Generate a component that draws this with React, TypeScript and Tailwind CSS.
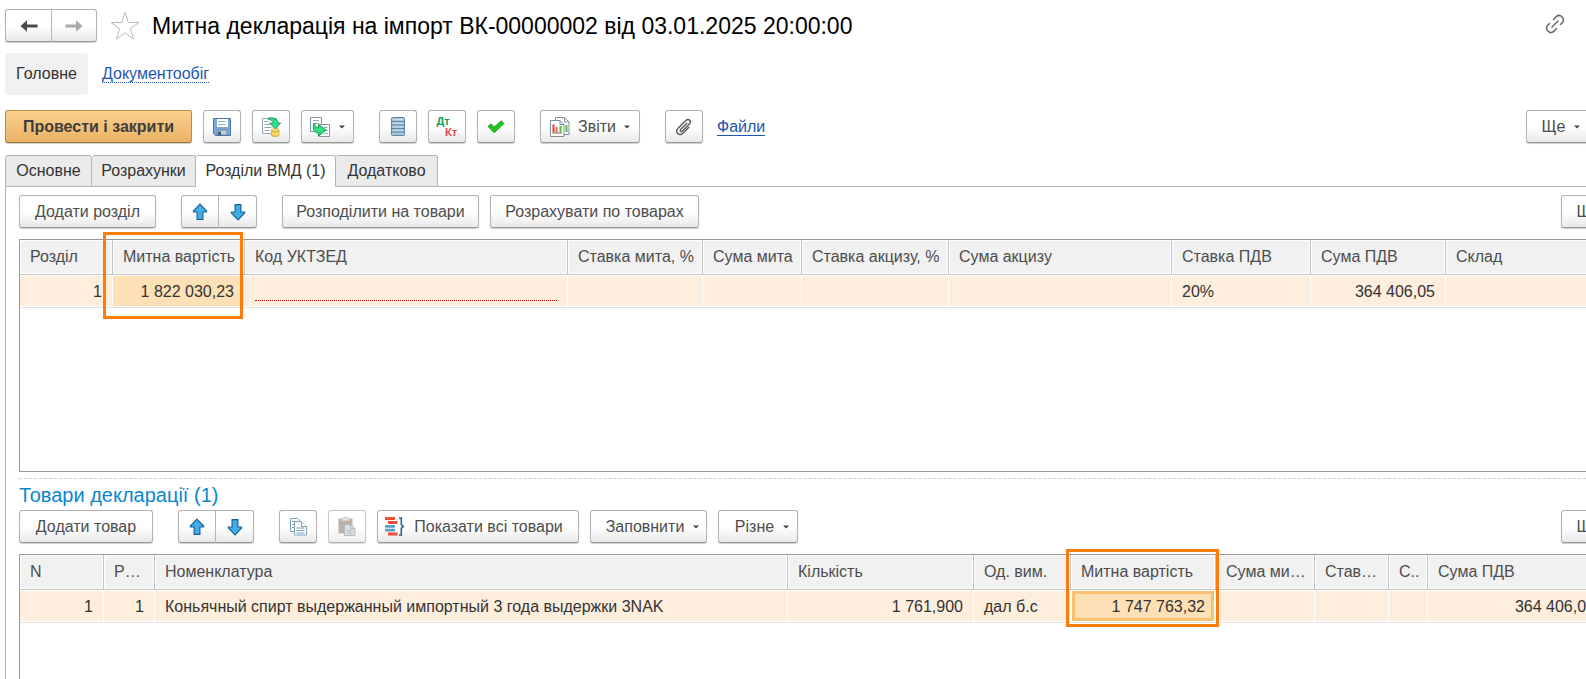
import React from 'react';

type Column = {
  title: string;
  width?: number;
  value?: string;
  right?: boolean;
  state?: 'marked' | 'active' | 'required';
};

const sections: Column[] = [
  { title: 'Розділ', width: 93, value: '1', right: true },
  { title: 'Митна вартість', width: 132, value: '1 822 030,23', right: true, state: 'marked' },
  { title: 'Код УКТЗЕД', width: 323, state: 'required' },
  { title: 'Ставка мита, %', width: 135 },
  { title: 'Сума мита', width: 99 },
  { title: 'Ставка акцизу, %', width: 147 },
  { title: 'Сума акцизу', width: 223 },
  { title: 'Ставка ПДВ', width: 139, value: '20%' },
  { title: 'Сума ПДВ', width: 135, value: '364 406,05', right: true },
  { title: 'Склад' },
];

const goods: Column[] = [
  { title: 'N', width: 84, value: '1', right: true },
  { title: 'Р…', width: 51, value: '1', right: true },
  { title: 'Номенклатура', width: 633, value: 'Коньячный спирт выдержанный импортный 3 года выдержки 3NAK' },
  { title: 'Кількість', width: 186, value: '1 761,900', right: true },
  { title: 'Од. вим.', width: 97, value: 'дал б.с' },
  { title: 'Митна вартість', width: 145, value: '1 747 763,32', right: true, state: 'active' },
  { title: 'Сума ми…', width: 99 },
  { title: 'Став…', width: 74 },
  { title: 'С..', width: 39 },
  { title: 'Сума ПДВ', width: 178, value: '364 406,05', right: true },
  { title: '' },
];

const buttonBase =
  'flex h-[33px] shrink-0 items-center justify-center border border-[#b3b3b3] border-b-[#989898] bg-linear-to-b from-white from-50% to-[#e9e9e9] text-base whitespace-nowrap text-[#4d4d4d] shadow-[0_1px_1px_#cfcfcf]';

const Button: React.FC<{ className?: string; label?: string; disabled?: boolean; children: React.ReactNode }> = ({
  className = '',
  label,
  disabled,
  children,
}) => (
  <button type="button" aria-label={label} disabled={disabled} className={`${buttonBase} rounded-[3px] ${className}`}>
    {children}
  </button>
);

const Caret = () => (
  <svg width="6" height="4" viewBox="0 0 6 4" className="shrink-0">
    <path d="M0 0.5h6L3 3.5z" fill="#444" />
  </svg>
);

const MoreButton = () => (
  <Button className="w-[70px] gap-[9px]">
    Ще
    <Caret />
  </Button>
);

const BlueArrow: React.FC<{ down?: boolean }> = ({ down }) => (
  <svg width="16" height="18" viewBox="0 0 16 18" className={down ? 'rotate-180' : ''}>
    <path d="M8 1.2 14.6 8v1H10.9v7.3H5.1V9H1.4V8z" fill="#41aeea" stroke="#1a6496" strokeWidth="1.2" />
  </svg>
);

const MoveButtons = () => (
  <div className="flex">
    <button type="button" aria-label="Перемістити вгору" className={`${buttonBase} w-[38px] rounded-l-[3px]`}>
      <BlueArrow />
    </button>
    <button type="button" aria-label="Перемістити вниз" className={`${buttonBase} w-[38px] rounded-r-[3px] border-l-0`}>
      <BlueArrow down />
    </button>
  </div>
);

const HistoryArrow: React.FC<{ color: string; forward?: boolean }> = ({ color, forward }) => (
  <svg width="18" height="14" viewBox="0 0 18 14" className={forward ? 'rotate-180' : ''}>
    <path d="M0.5 7 7 1.2V5.5H17.5V8.5H7V12.8z" fill={color} />
  </svg>
);

const SaveIcon = () => (
  <svg width="18" height="18" viewBox="0 0 18 18">
    <path d="M.5.5h17v17H2.500l-2-2z" fill="#7ba8d8" stroke="#4d769f" />
    <path d="M4 1h11v8H4z" fill="#fff" />
    <path d="M5 3.500h8M5 6.500h8" stroke="#9fb2c4" />
    <path d="M4 12h10v5H4z" fill="#c3cfd6" stroke="#5d7d99" strokeWidth=".8" />
    <path d="M5 13.500h3V17H5z" fill="#3f5b74" />
  </svg>
);

const PostIcon = () => (
  <svg width="20" height="20" viewBox="0 0 20 20">
    <path d="M1.500 1.500h14v15h-14z" fill="#fff" stroke="#95a3b0" />
    <path d="M3.500 4.500h4M3.500 7.500h6M3.500 10.500h7M3.500 13.500h5" stroke="#95a3b0" />
    <path d="M7.500 1c6-.8 9.200 1.200 9.500 5h2.700l-5.500 6-5.500-6h3.500C12 4 10.500 2.800 7.500 2.500z" fill="#2ddf85" stroke="#138a48" strokeWidth=".8" />
    <path d="M10.500 13v5c0 2 7.500 2 7.500 0v-5z" fill="#f0cb48" stroke="#c29a24" strokeWidth=".7" />
    <ellipse cx="14.250" cy="13" rx="3.750" ry="1.300" fill="#fdf0a0" stroke="#c29a24" strokeWidth=".7" />
    <path d="M10.500 15.500c0 2 7.500 2 7.500 0" fill="none" stroke="#fdf0a0" />
  </svg>
);

const CreateFromIcon = () => (
  <svg width="21" height="20" viewBox="0 0 21 20">
    <path d="M.5.5h11v14H.5z" fill="#fff" stroke="#8194a8" />
    <path d="M3 3.500h6M3 6.500h6" stroke="#9aa9b8" />
    <path d="M9.500 7.500h10v12h-10z" fill="#fff" stroke="#8194a8" />
    <path d="M14 10.500h3.500M16 13.500h2M14 16.500h4" stroke="#9aa9b8" />
    <path d="M4.500 6.500C2.500 9 2.500 15.500 8.500 16v3.200L16 13 8.500 7.500v3.300C6.300 10.800 5 9.500 4.500 6.500z" fill="#2ddf85" stroke="#138a48" strokeWidth=".9" />
  </svg>
);

const RegisterIcon = () => (
  <svg width="14" height="19" viewBox="0 0 14 19">
    <rect x=".5" y=".5" width="13" height="18" rx="1" fill="#a5c5dc" stroke="#63839f" />
    <path d="M0 4.500h14M0 8h14M0 11.500h14M0 15h14" stroke="#63839f" strokeWidth="1.200" />
    <path d="M2 2.500h10M2 6.200h10M2 9.800h10M2 13.300h10" stroke="#c9dfee" />
  </svg>
);

const CheckIcon = () => (
  <svg width="18" height="14" viewBox="0 0 18 14">
    <path d="M1 6.500 4 3.800 7.200 7 14.200.8 17 3.600 7.200 12.800z" fill="#1fc41f" stroke="#129412" strokeWidth=".8" />
  </svg>
);

const ReportIcon = () => (
  <svg width="20" height="20" viewBox="0 0 20 20">
    <path d="M5.500.5h9l4.500 4.500v12.500H5.500z" fill="#fff" stroke="#7f8f9d" />
    <path d="M14.500.5V5H19" fill="none" stroke="#7f8f9d" />
    <path d="M16.500 8v7" stroke="#55bd3c" strokeWidth="2" />
    <path d="M.5 3.500h9.500l4 4v12H.5z" fill="#fff" stroke="#7f8f9d" />
    <path d="M10 3.500v4h4" fill="none" stroke="#7f8f9d" />
    <path d="M3.500 7.500v8" stroke="#d94032" strokeWidth="2" />
    <path d="M6.500 10v5.500" stroke="#ef6b4c" strokeWidth="2" />
    <path d="M10.500 9v6.500" stroke="#55bd3c" strokeWidth="2" />
    <path d="M2.500 16h9.500" stroke="#8a6a5a" />
  </svg>
);

const ClipIcon = () => (
  <svg width="18" height="18" viewBox="0 0 18 18" fill="none" stroke="#555" strokeWidth="1.300" strokeLinecap="round">
    <path d="M11.800 5.300 5.600 11.500c-1 1.200.5 2.700 1.700 1.700l7.300-7.400c2.300-2.600-1-5.700-3.500-3.500L3 10.300c-3.500 3.800 1.200 8.300 4.900 4.900l6-6" />
  </svg>
);

const LinkIcon = () => (
  <svg width="20" height="20" viewBox="0 0 20 20" fill="none" stroke="#666" strokeWidth="1.500" strokeLinecap="round">
    <path d="M7 13 13 7" />
    <path d="M8.500 5.500 11.300 2.600c3.600-3.300 9.300 1.700 6.100 6L15.500 10.500" />
    <path d="M11.500 14.500 8.700 17.400c-3.600 3.300-9.300-1.700-6.100-6L4.500 9.500" />
  </svg>
);

const CopyIcon = () => (
  <svg width="17" height="18" viewBox="0 0 17 18" fill="#fff" stroke="#7fa3b8">
    <path d="M.5.500h7l3 3v10H.5z" />
    <path d="M2 3.500h2M2 6.500h2M2 9.500h2" />
    <path d="M4.500 3.500h7l5 5v8.500h-12z" />
    <path d="M11.500 3.500v5h5M6.500 10h8M6.500 12.500h8M6.500 15h8" />
  </svg>
);

const PasteIcon = () => (
  <svg width="18" height="19" viewBox="0 0 18 19">
    <path d="M.5 1.500h14v15H.5z" fill="#a8968c" />
    <path d="M3.500 4V2.200L5.500.5h4l2 1.700V4z" fill="#d9d9d9" stroke="#a5a5a5" strokeWidth=".7" />
    <path d="M6.500 7.500h6l4.500 4v7H6.500z" fill="#d3d7dc" stroke="#98a1aa" />
    <path d="M12.500 7.500v4H17M8.500 13.500h6M8.500 16h6" fill="none" stroke="#98a1aa" />
  </svg>
);

const ShowAllIcon = () => (
  <svg width="20" height="19" viewBox="0 0 20 19">
    <path d="M0 1.500h10M3 5.500h9.500M3 17h9.500" stroke="#f04e37" strokeWidth="2.800" />
    <path d="M0 9.300h10M0 13.200h10" stroke="#5d9fc9" strokeWidth="2.800" />
    <path d="M14 1h2.300v6.500l2 1.900-2 1.900V18H14" fill="none" stroke="#2f6690" strokeWidth="1.600" />
  </svg>
);

const DataTable: React.FC<{ columns: Column[]; label: string }> = ({ columns, label }) => (
  <table aria-label={label} className="w-full table-fixed border-separate border-spacing-0 text-base">
    <colgroup>
      {columns.map((column, i) => (
        <col key={i} style={{ width: column.width }} />
      ))}
    </colgroup>
    <thead>
      <tr className="h-[35px] bg-[#f1f1f1]">
        {columns.map((column, i) => (
          <th
            key={i}
            className="border-r border-b border-[#c4c4c4] pr-1 pl-[10px] text-left font-normal whitespace-nowrap text-[#4d4d4d] shadow-[inset_0_0_0_1px_#fff]"
          >
            {column.title}
          </th>
        ))}
      </tr>
    </thead>
    <tbody>
      <tr className="h-[33px] bg-[#feeedd]">
        {columns.map((column, i) => (
          <td
            key={i}
            className={`border-r border-b border-r-white border-b-[#e2e2e2] px-[10px] pt-[2px] whitespace-nowrap text-[#333] ${
              column.right ? 'text-right' : 'text-left'
            } ${
              column.state === 'active'
                ? 'bg-[#fde0b5] shadow-[inset_0_0_0_1px_#fff,inset_0_0_0_4px_#f9c16e]'
                : 'shadow-[inset_0_1px_#fff,inset_0_-1px_#fff]'
            } ${column.state === 'marked' ? 'bg-[#fde0b5]' : ''}`}
          >
            {column.state === 'required' ? (
              <div className="h-[18px] border-b border-dotted border-[#e00000]" />
            ) : (
              column.value
            )}
          </td>
        ))}
      </tr>
    </tbody>
  </table>
);

const tabs = [
  { title: 'Основне', width: 'w-[87px]' },
  { title: 'Розрахунки', width: 'w-[104px]' },
  { title: 'Розділи ВМД (1)', width: 'w-[140px]' },
  { title: 'Додатково', width: 'w-[102px]' },
];

const App: React.FC = () => (
  <div className="flex h-screen flex-col overflow-hidden bg-white pl-[5px] font-['Liberation_Sans',Arial,sans-serif] text-[#333]">
    {/* Title */}
    <header className="mt-[10px] flex h-[31px] shrink-0 items-center pr-[21px]">
      <div className="flex">
        <button type="button" aria-label="Назад" className={`${buttonBase} h-[31px] w-[47px] rounded-l-[3px]`}>
          <HistoryArrow color="#4a4a4a" />
        </button>
        <button type="button" aria-label="Вперед" className={`${buttonBase} h-[31px] w-[45px] rounded-r-[3px] border-l-0`}>
          <HistoryArrow color="#aaa" forward />
        </button>
      </div>
      <button type="button" aria-label="Додати в обране" className="ml-[13px]">
        <svg width="30" height="30" viewBox="0 0 30 30">
          <path
            d="M15 1.500 18.300 11.500H29L20.400 17.700 23.700 28 15 21.800 6.300 28 9.600 17.700 1 11.500H11.700z"
            fill="none"
            stroke="#b4bac2"
          />
        </svg>
      </button>
      <h1 className="ml-3 text-[23px] leading-8 whitespace-nowrap text-black">
        Митна декларація на імпорт ВК-00000002 від 03.01.2025 20:00:00
      </h1>
      <button type="button" aria-label="Отримати посилання" className="mb-1 ml-auto">
        <LinkIcon />
      </button>
    </header>

    {/* Navigation */}
    <nav className="mt-3 flex h-[42px] shrink-0 items-center text-base">
      <a href="#main" className="flex h-full w-[83px] items-center justify-center rounded-[4px] bg-[#f1f1f1] text-[#333]">
        Головне
      </a>
      <a href="#docs" className="ml-[14px] border-b border-dotted border-[#1f55b0] leading-4 text-[#1f55b0]">
        Документообіг
      </a>
    </nav>

    {/* Commands */}
    <div className="mt-[15px] flex shrink-0 items-center">
      <button
        type="button"
        className="h-[33px] w-[187px] shrink-0 rounded-[3px] border border-[#b58c4c] border-b-[#96723a] bg-linear-to-b from-[#fcd08e] to-[#e9b365] text-base font-bold whitespace-nowrap text-[#3d3d3d] shadow-[0_1px_1px_#cfcfcf]"
      >
        Провести і закрити
      </button>
      <div className="ml-[11px] flex gap-[11px]">
        <Button className="w-[38px]" label="Записати">
          <SaveIcon />
        </Button>
        <Button className="w-[38px]" label="Провести">
          <PostIcon />
        </Button>
        <Button className="w-[53px] gap-2" label="Створити на підставі">
          <CreateFromIcon />
          <Caret />
        </Button>
      </div>
      <div className="ml-[25px] flex gap-[11px]">
        <Button className="w-[38px]" label="Рухи документа">
          <RegisterIcon />
        </Button>
        <Button className="w-[38px]">
          <span className="flex flex-col text-[11px] leading-[11px] font-bold">
            <span className="pr-2 text-[#149a52]">Дт</span>
            <span className="pl-2 text-[#e04848]">Кт</span>
          </span>
        </Button>
        <Button className="w-[38px]" label="Перевірити">
          <CheckIcon />
        </Button>
      </div>
      <div className="ml-[25px] flex items-center">
        <Button className="w-[100px] gap-2">
          <ReportIcon />
          Звіти
          <Caret />
        </Button>
        <div className="ml-[25px]">
          <Button className="w-[38px]" label="Вкласти файл">
            <ClipIcon />
          </Button>
        </div>
        <a href="#files" className="mt-[2px] ml-[14px] border-b border-[#1f55b0] leading-4 text-[#1f55b0]">
          Файли
        </a>
      </div>
      <div className="-mr-[10px] ml-auto">
        <MoreButton />
      </div>
    </div>

    {/* Tabs */}
    <div role="tablist" className="mt-3 flex h-8 shrink-0 text-base">
      {tabs.map((tab, i) => (
        <button
          key={tab.title}
          type="button"
          role="tab"
          aria-selected={i === 2}
          className={`rounded-t-[3px] border border-[#b3b3b3] whitespace-nowrap ${tab.width} ${
            i === 2 ? 'border-b-white bg-white' : 'bg-[#ebebeb]'
          } ${i > 0 ? 'border-l-0' : ''}`}
        >
          {tab.title}
        </button>
      ))}
      <div className="flex-1 border-b border-[#b3b3b3]" />
    </div>

    <main className="flex min-h-0 flex-1 flex-col border-l border-[#b3b3b3] pl-[13px]">
      <div className="mt-2 -mr-[45px] flex shrink-0 items-center">
        <Button className="w-[137px]">Додати розділ</Button>
        <div className="ml-[25px]">
          <MoveButtons />
        </div>
        <div className="ml-[25px] flex gap-[11px]">
          <Button className="w-[197px]">Розподілити на товари</Button>
          <Button className="w-[209px]">Розрахувати по товарах</Button>
        </div>
        <div className="ml-auto">
          <MoreButton />
        </div>
      </div>

      <div className="relative mt-[11px] -mr-[45px] h-[233px] shrink-0 border border-[#999]">
        <DataTable columns={sections} label="Розділи ВМД" />
        <div className="pointer-events-none absolute -top-[8px] left-[83px] h-[87px] w-[140px] border-3 border-[#ff7b0a]" />
      </div>

      <div className="mt-[6px] shrink-0 border-t border-dashed border-[#ccc]" />

      <h2 className="mt-1 shrink-0 text-xl leading-6 text-[#0a87cd]">Товари декларації (1)</h2>

      <div className="mt-[3px] -mr-[45px] flex shrink-0 items-center">
        <Button className="w-[134px]">Додати товар</Button>
        <div className="ml-[25px]">
          <MoveButtons />
        </div>
        <div className="ml-[25px] flex gap-[11px]">
          <Button className="w-[38px]" label="Скопіювати">
            <CopyIcon />
          </Button>
          <Button className="w-[38px] opacity-75" label="Вставити" disabled>
            <PasteIcon />
          </Button>
          <Button className="w-[202px] gap-[9px] pr-2">
            <ShowAllIcon />
            Показати всі товари
          </Button>
          <Button className="w-[117px] gap-[9px] pl-2">
            Заповнити
            <Caret />
          </Button>
          <Button className="w-[80px] gap-[9px] pl-2">
            Різне
            <Caret />
          </Button>
        </div>
        <div className="ml-auto">
          <MoreButton />
        </div>
      </div>

      <div className="relative mt-[11px] -mr-[45px] flex-1 border border-b-0 border-[#999]">
        <DataTable columns={goods} label="Товари декларації" />
        <div className="pointer-events-none absolute -top-[6px] left-[1046px] h-[78px] w-[153px] border-3 border-[#ff7b0a]" />
      </div>
    </main>
  </div>
);

export default App;
